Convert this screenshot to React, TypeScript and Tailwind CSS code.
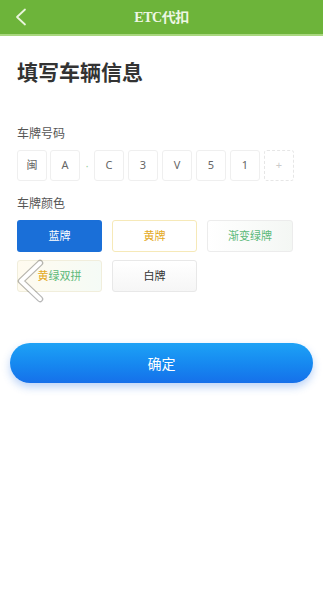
import React from "react";

const plate = ["闽", "A", "C", "3", "V", "5", "1"];

function Box({ children, dashed }: { children?: React.ReactNode; dashed?: boolean }) {
  return (
    <div
      className={`w-[30px] h-[31px] flex items-center justify-center rounded-[3px] text-[11px] text-[#666] ${
        dashed ? "border border-dashed border-[#e6e6e6] text-[#ccc]" : "border border-[#efefef]"
      }`}
    >
      {children}
    </div>
  );
}

export default function App() {
  return (
    <div className="w-[323px] h-[590px] bg-white relative overflow-hidden" style={{ fontFamily: '"Noto Sans", "Noto Sans CJK SC", sans-serif' }}>
      <div className="h-[34px] bg-[#6db43a] relative flex items-center justify-center">
        <svg className="absolute left-[14px] top-[8px]" width="14" height="18" viewBox="0 0 14 18">
          <path d="M11 1.5 L3 9 L11 16.5" stroke="#e9f5dc" strokeWidth="1.8" fill="none" strokeLinecap="round" strokeLinejoin="round" />
        </svg>
        <span className="text-[14px] font-bold text-[#eef7e4] tracking-[-0.5px]" style={{ fontFamily: '"Liberation Serif", "Noto Sans CJK SC", serif' }}>
          ETC代扣
        </span>
      </div>
      <div className="h-[2px] bg-[#a9d77f]" />

      <div className="px-[17px]">
        <div className="mt-[22px] text-[21px] font-bold text-[#333] leading-[28px]">填写车辆信息</div>

        <div className="mt-[40px] text-[12px] text-[#555] leading-[16px]">车牌号码</div>
        <div className="mt-[8px] flex items-center">
          <Box>{plate[0]}</Box>
          <div className="ml-[3px]"><Box>{plate[1]}</Box></div>
          <div className="w-[14px] flex justify-center text-[10px] text-[#9ad0a0] leading-none">·</div>
          <div className="flex gap-[4px]">
            {plate.slice(2).map((c, i) => (
              <Box key={i}>{c}</Box>
            ))}
            <Box dashed>+</Box>
          </div>
        </div>

        <div className="mt-[15px] text-[12px] text-[#555] leading-[16px]">车牌颜色</div>
        <div className="mt-[8px] grid grid-cols-[85px_85px_86px] gap-x-[10px] gap-y-[8px]">
          <div className="h-[32px] rounded-[3px] bg-[#1a6fd8] text-white text-[11px] flex items-center justify-center">蓝牌</div>
          <div className="h-[32px] rounded-[3px] border border-[#f6e9b8] bg-white text-[#e4a91c] text-[11px] flex items-center justify-center">黄牌</div>
          <div className="h-[32px] rounded-[3px] border border-[#ececec] bg-gradient-to-r from-white to-[#f4f7f4] text-[#5cb979] text-[11px] flex items-center justify-center">渐变绿牌</div>
          <div className="h-[32px] rounded-[3px] border border-[#f1eedc] bg-gradient-to-r from-[#fffbef] to-[#f5fbf6] text-[11px] flex items-center justify-center">
            <span className="text-[#e4a91c]">黄</span>
            <span className="text-[#5cb979]">绿双拼</span>
          </div>
          <div className="h-[32px] rounded-[3px] border border-[#e8e8e8] bg-gradient-to-b from-white to-[#f6f6f6] text-[#333] text-[11px] flex items-center justify-center">白牌</div>
        </div>
      </div>

      <div className="px-[10px] mt-[51px]">
        <div className="h-[40px] rounded-full bg-gradient-to-b from-[#1ea2f6] to-[#1670ea] shadow-[0_4px_8px_rgba(30,110,230,0.3)] flex items-center justify-center text-white text-[14px]">
          确定
        </div>
      </div>

      <svg className="absolute left-[14px] top-[259px]" width="32" height="44" viewBox="0 0 32 44">
        <path d="M26 4 L7 22 L26 40" stroke="rgba(0,0,0,0.28)" strokeWidth="6.5" fill="none" strokeLinecap="round" strokeLinejoin="round" />
        <path d="M26 4 L7 22 L26 40" stroke="#ffffff" strokeWidth="4" fill="none" strokeLinecap="round" strokeLinejoin="round" />
      </svg>
    </div>
  );
}
